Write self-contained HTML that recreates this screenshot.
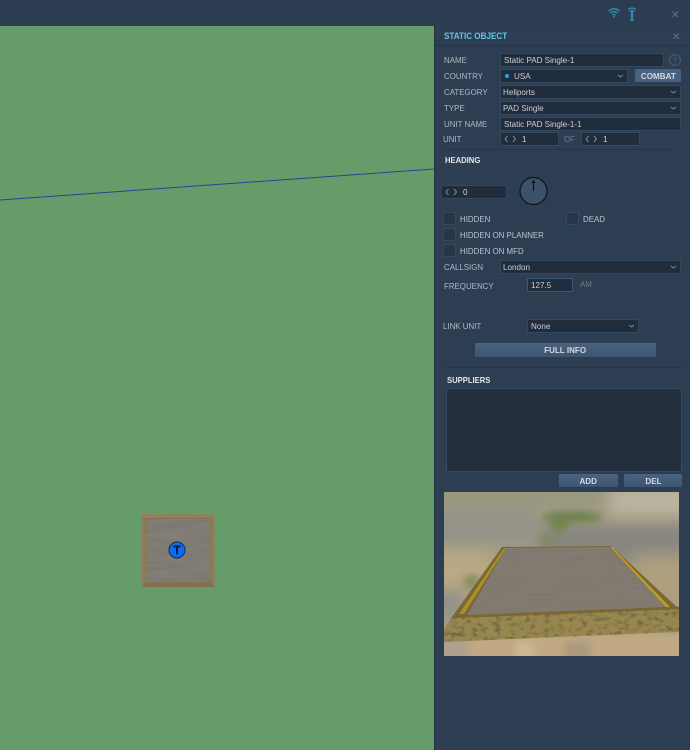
<!DOCTYPE html>
<html><head><meta charset="utf-8">
<style>
html,body{margin:0;padding:0;background:#2d3e53}
body{width:690px;height:750px;position:relative;overflow:hidden;font-family:"Liberation Sans",sans-serif;font-size:8.5px;color:#b4bdc6}
.a{position:absolute;white-space:nowrap}
.l{position:absolute;white-space:nowrap;line-height:12px;color:#b0b9c2;transform:scaleX(.93);transform-origin:0 50%}
.f{position:absolute;height:12px;background:#212d3c;border:1px solid #34495f;line-height:12px;color:#c8cfd6;padding-left:3px;white-space:nowrap;box-sizing:content-box}
.f span{display:inline-block;transform:scaleX(.95);transform-origin:0 50%}
.f .dot{display:inline-block;width:4px;height:4px;border-radius:50%;background:#12aef0;margin:0 5px 1px 1px;vertical-align:middle}
.f svg.n{display:inline-block;margin:0 5px 0 0;vertical-align:-1px}
.b{position:absolute;background:linear-gradient(#486381,#3e5572);color:#d3d9df;font-weight:bold;text-align:center;border-radius:1px}
.b span{display:inline-block;transform:scaleX(.95)}
.s{position:absolute;white-space:nowrap;font-weight:bold;line-height:12px;color:#e3e7ea;transform:scaleX(.9);transform-origin:0 50%}
.c{position:absolute;width:11px;height:11px;background:#273545;border:1px solid #34495f}
.chev{position:absolute;right:3px;top:3px}
.h{position:absolute;height:1px;background:#263444}
</style></head><body>
<div class="a" style="left:0;top:26px;width:434px;height:724px;background:#659c69"></div>
<div class="a" style="left:0;top:0;width:690px;height:26px;background:#2c3d51"></div>
<div class="a" style="left:434px;top:26px;width:256px;height:724px;background:#2d3e53;border-left:1px solid #243343;box-sizing:border-box"></div>
<div class="h" style="left:435px;top:45px;width:255px"></div>

<svg class="a" style="left:0;top:26px" width="434" height="200"><line x1="0" y1="174" x2="434" y2="143" stroke="#24469b" stroke-width="1"/></svg>

<svg class="a" style="left:607px;top:6px" width="32" height="16" fill="none" stroke="#2f8dab">
<path d="M1.500 5 Q7 0.500 12.500 5" stroke-width="1.500"/><path d="M3.500 7 Q7 4 10.500 7" stroke-width="1.500"/><path d="M5.500 9 Q7 7.800 8.500 9" stroke-width="1.500"/><circle cx="7" cy="10.500" r="1" fill="#2f8dab" stroke="none"/>
<path d="M21 3.500 Q25 0.500 29 3.500" stroke-width="1.300"/><path d="M22.500 5.500 Q25 3.500 27.500 5.500" stroke-width="1.300"/>
<path d="M25 5.500 V13" stroke-width="2.200"/><path d="M23 15 L25 11 L27 15Z" fill="#2f8dab" stroke="none"/>
</svg>
<svg class="a" style="left:671px;top:10px" width="9" height="9" stroke="#62717f" stroke-width="1"><path d="M1.500 1.500 L7 7 M7 1.500 L1.500 7"/></svg>
<svg class="a" style="left:672px;top:32px" width="9" height="9" stroke="#62717f" stroke-width="1"><path d="M1.500 1.500 L7 7 M7 1.500 L1.500 7"/></svg>

<div class="s" style="left:444px;top:30px;line-height:13px;font-size:9px;color:#61c5e4">STATIC OBJECT</div>

<div class="l" style="left:444px;top:54px">NAME</div>
<div class="f" style="left:500px;top:53px;width:159px"><span>Static PAD Single-1</span></div>
<svg class="a" style="left:668px;top:53px" width="14" height="14"><circle cx="7" cy="7" r="5.500" fill="none" stroke="#4a5d70"/><text x="7" y="10" text-anchor="middle" font-size="8" fill="#4f6173" font-family="Liberation Sans">?</text></svg>

<div class="l" style="left:444px;top:70px">COUNTRY</div>
<div class="f" style="left:500px;top:69px;width:123px"><i class="dot"></i><span>USA</span><svg class="chev" width="7" height="6" fill="none" stroke="#7b8894"><path d="M1 2 L3.500 4 L6 2"/></svg></div>
<div class="b" style="left:635px;top:69px;width:46px;height:13px;line-height:14px;background:#486381"><span>COMBAT</span></div>

<div class="l" style="left:444px;top:86px">CATEGORY</div>
<div class="f" style="left:500px;top:85px;width:177px;padding-left:2px"><span>Heliports</span><svg class="chev" width="7" height="6" fill="none" stroke="#7b8894"><path d="M1 2 L3.500 4 L6 2"/></svg></div>

<div class="l" style="left:444px;top:102px">TYPE</div>
<div class="f" style="left:500px;top:101px;width:177px;padding-left:2px"><span>PAD Single</span><svg class="chev" width="7" height="6" fill="none" stroke="#7b8894"><path d="M1 2 L3.500 4 L6 2"/></svg></div>

<div class="l" style="left:444px;top:118px">UNIT NAME</div>
<div class="f" style="left:500px;top:117px;width:176px"><span>Static PAD Single-1-1</span></div>

<div class="l" style="left:443px;top:133px">UNIT</div>
<div class="f" style="left:500px;top:132px;width:54px"><svg class="n" width="13" height="8" fill="none" stroke="#7b8894"><path d="M3.500 1 L1 4 L3.500 7 M9 1 L11.500 4 L9 7"/></svg><span>1</span></div>
<div class="l" style="left:564px;top:133px;color:#6e7c89">OF</div>
<div class="f" style="left:581px;top:132px;width:54px"><svg class="n" width="13" height="8" fill="none" stroke="#7b8894"><path d="M3.500 1 L1 4 L3.500 7 M9 1 L11.500 4 L9 7"/></svg><span>1</span></div>
<div class="h" style="left:444px;top:149px;width:228px"></div>

<div class="s" style="left:445px;top:154px">HEADING</div>
<div class="f" style="left:441px;top:185px;width:61px"><svg class="n" width="13" height="8" fill="none" stroke="#7b8894"><path d="M3.500 1 L1 4 L3.500 7 M9 1 L11.500 4 L9 7"/></svg><span>0</span></div>
<svg class="a" style="left:518px;top:176px" width="32" height="30"><circle cx="15.500" cy="15" r="13.500" fill="#3c526b" stroke="#0e1620" stroke-width="1.300"/><path d="M15.500 15 V5" stroke="#0e1620" stroke-width="1.300"/><path d="M13.300 7 L15.500 3.500 L17.700 7Z" fill="#0e1620"/></svg>

<div class="c" style="left:443px;top:212px"></div><div class="l" style="left:460px;top:213px;color:#bcc4cc">HIDDEN</div>
<div class="c" style="left:566px;top:212px"></div><div class="l" style="left:583px;top:213px;color:#bcc4cc">DEAD</div>
<div class="c" style="left:443px;top:228px"></div><div class="l" style="left:460px;top:229px;color:#bcc4cc">HIDDEN ON PLANNER</div>
<div class="c" style="left:443px;top:244px"></div><div class="l" style="left:460px;top:245px;color:#bcc4cc">HIDDEN ON MFD</div>

<div class="l" style="left:444px;top:261px">CALLSIGN</div>
<div class="f" style="left:500px;top:260px;width:177px;padding-left:2px"><span>London</span><svg class="chev" width="7" height="6" fill="none" stroke="#7b8894"><path d="M1 2 L3.500 4 L6 2"/></svg></div>
<div class="l" style="left:444px;top:280px">FREQUENCY</div>
<div class="f" style="left:527px;top:278px;width:41px;padding-left:3px;border-color:#3a5875"><span>127.5</span></div>
<div class="l" style="left:580px;top:278px;color:#6e7c89">AM</div>

<div class="l" style="left:443px;top:320px">LINK UNIT</div>
<div class="f" style="left:527px;top:319px;width:107px;padding-left:3px"><span>None</span><svg class="chev" width="7" height="6" fill="none" stroke="#7b8894"><path d="M1 2 L3.500 4 L6 2"/></svg></div>
<div class="b" style="left:475px;top:343px;width:181px;height:14px;line-height:15px"><span>FULL INFO</span></div>
<div class="h" style="left:446px;top:367px;width:236px"></div>

<div class="s" style="left:447px;top:374px">SUPPLIERS</div>
<div class="a" style="left:446px;top:388px;width:234px;height:82px;background:#232f3e;border:1px solid #35495f"></div>
<div class="b" style="left:559px;top:474px;width:59px;height:13px;line-height:14px"><span>ADD</span></div>
<div class="b" style="left:624px;top:474px;width:58px;height:13px;line-height:14px"><span>DEL</span></div>

<svg class="a" style="left:444px;top:492px" width="235" height="164" viewBox="0 0 235 164">
<defs>
<filter id="bl" x="-20%" y="-20%" width="140%" height="140%"><feGaussianBlur stdDeviation="8"/></filter>
<filter id="bs" x="-30%" y="-30%" width="160%" height="160%"><feGaussianBlur stdDeviation="3.500"/></filter>
<filter id="bt" x="-5%" y="-50%" width="110%" height="200%"><feGaussianBlur stdDeviation="3.500"/></filter>
<filter id="wood" x="0" y="0" width="100%" height="100%"><feTurbulence type="fractalNoise" baseFrequency="0.025 0.45" numOctaves="3" seed="4"/><feColorMatrix values="0 0 0 0 0.2  0 0 0 0 0.18  0 0 0 0 0.16  1.600 0 0 0 -0.62"/><feComposite in2="SourceGraphic" operator="in"/><feMerge><feMergeNode in="SourceGraphic"/><feMergeNode/></feMerge></filter>
<filter id="rock" x="0" y="0" width="100%" height="100%"><feTurbulence type="fractalNoise" baseFrequency="0.14 0.2" numOctaves="3" seed="8"/><feColorMatrix values="0 0 0 0 0.16  0 0 0 0 0.13  0 0 0 0 0.06  3 0 0 0 -1.400"/><feComposite in2="SourceGraphic" operator="in"/><feMerge><feMergeNode in="SourceGraphic"/><feMergeNode/></feMerge></filter>
<clipPath id="pc"><rect width="235" height="164"/></clipPath>
</defs>
<g clip-path="url(#pc)">
<rect width="235" height="164" fill="#a39c83"/>
<g filter="url(#bl)">
<rect x="-20" y="-20" width="280" height="34" fill="#98987e"/>
<rect x="-20" y="18" width="110" height="35" fill="#93938a"/>
<rect x="95" y="32" width="160" height="40" fill="#86867f"/>
<rect x="165" y="-5" width="90" height="28" fill="#bdb5a0"/>
<rect x="-20" y="58" width="70" height="40" fill="#b9a985"/>
<rect x="190" y="62" width="60" height="50" fill="#ae9f7e"/>
<rect x="-20" y="98" width="38" height="22" fill="#8d8e8b"/>
</g>
<g filter="url(#bs)">
<ellipse cx="128" cy="25" rx="30" ry="6" fill="#70834f"/>
<ellipse cx="115" cy="33" rx="9" ry="7" fill="#73854f"/>
<ellipse cx="103" cy="48" rx="9" ry="4" fill="#7b8a60"/>
<ellipse cx="28" cy="90" rx="9" ry="8" fill="#8b9062"/>
</g>
<g filter="url(#bt)">
<rect x="-10" y="140" width="260" height="34" fill="#bfa882"/>
<rect x="-10" y="146" width="34" height="24" fill="#ada08e"/>
<rect x="120" y="150" width="26" height="20" fill="#ab9a7e"/>
<rect x="72" y="150" width="18" height="20" fill="#cdb892"/>
</g>
<path d="M0 138 L8 125 L58 55 L167 54 L235 117 V135 L0 145Z" fill="#7a6734"/>
<path d="M23 123 L62 56 L165 55 L223 115 Z" fill="#827b70" filter="url(#wood)"/>
<path d="M15 122 L60 56 L62 56 L20 122 Z" fill="#a88f2a"/>
<path d="M166 55 L168 55 L226 115 L223 116 Z" fill="#c09c22"/>
<path d="M0 138 L8 126 L235 117 V140 Q110 145 0 150 Z" fill="#988850" filter="url(#rock)"/>
<path d="M8 125 L235 116" stroke="#7a6830" stroke-width="2.500" fill="none"/>
</g>
</svg>

<svg class="a" style="left:141px;top:514px" width="74" height="74" viewBox="0 0 74 74">
<defs><filter id="w2" x="0" y="0" width="100%" height="100%"><feTurbulence type="fractalNoise" baseFrequency="0.02 0.3" numOctaves="2" seed="3"/><feColorMatrix values="0 0 0 0 0.35  0 0 0 0 0.33  0 0 0 0 0.3  0.4 0 0 0 -0.14"/><feComposite in2="SourceGraphic" operator="in"/><feMerge><feMergeNode in="SourceGraphic"/><feMergeNode/></feMerge></filter></defs>
<rect x="0.500" y="0.500" width="73" height="72.500" fill="#8d7b5a"/>
<path d="M0 0 L74 0 L70 4 L4 4 Z" fill="#94805a"/><path d="M0 73 L74 73 L70 69 L4 69 Z" fill="#83724f"/>
<rect x="4" y="4" width="66" height="65" fill="#7f745a"/>
<rect x="5" y="5" width="64" height="63" fill="#7e7971" filter="url(#w2)"/>
<path d="M5 6 V67 M69 6 V67" stroke="#8e7f30" stroke-width="1" stroke-dasharray="2 1"/>
<circle cx="36" cy="36" r="8" fill="#0c6bf2" stroke="#0d2a55" stroke-width="1"/>
<path d="M32.500 32.500 H39.500 M36 32.500 V40.500" stroke="#0a1422" stroke-width="1.700" fill="none"/>
</svg>
</body></html>
